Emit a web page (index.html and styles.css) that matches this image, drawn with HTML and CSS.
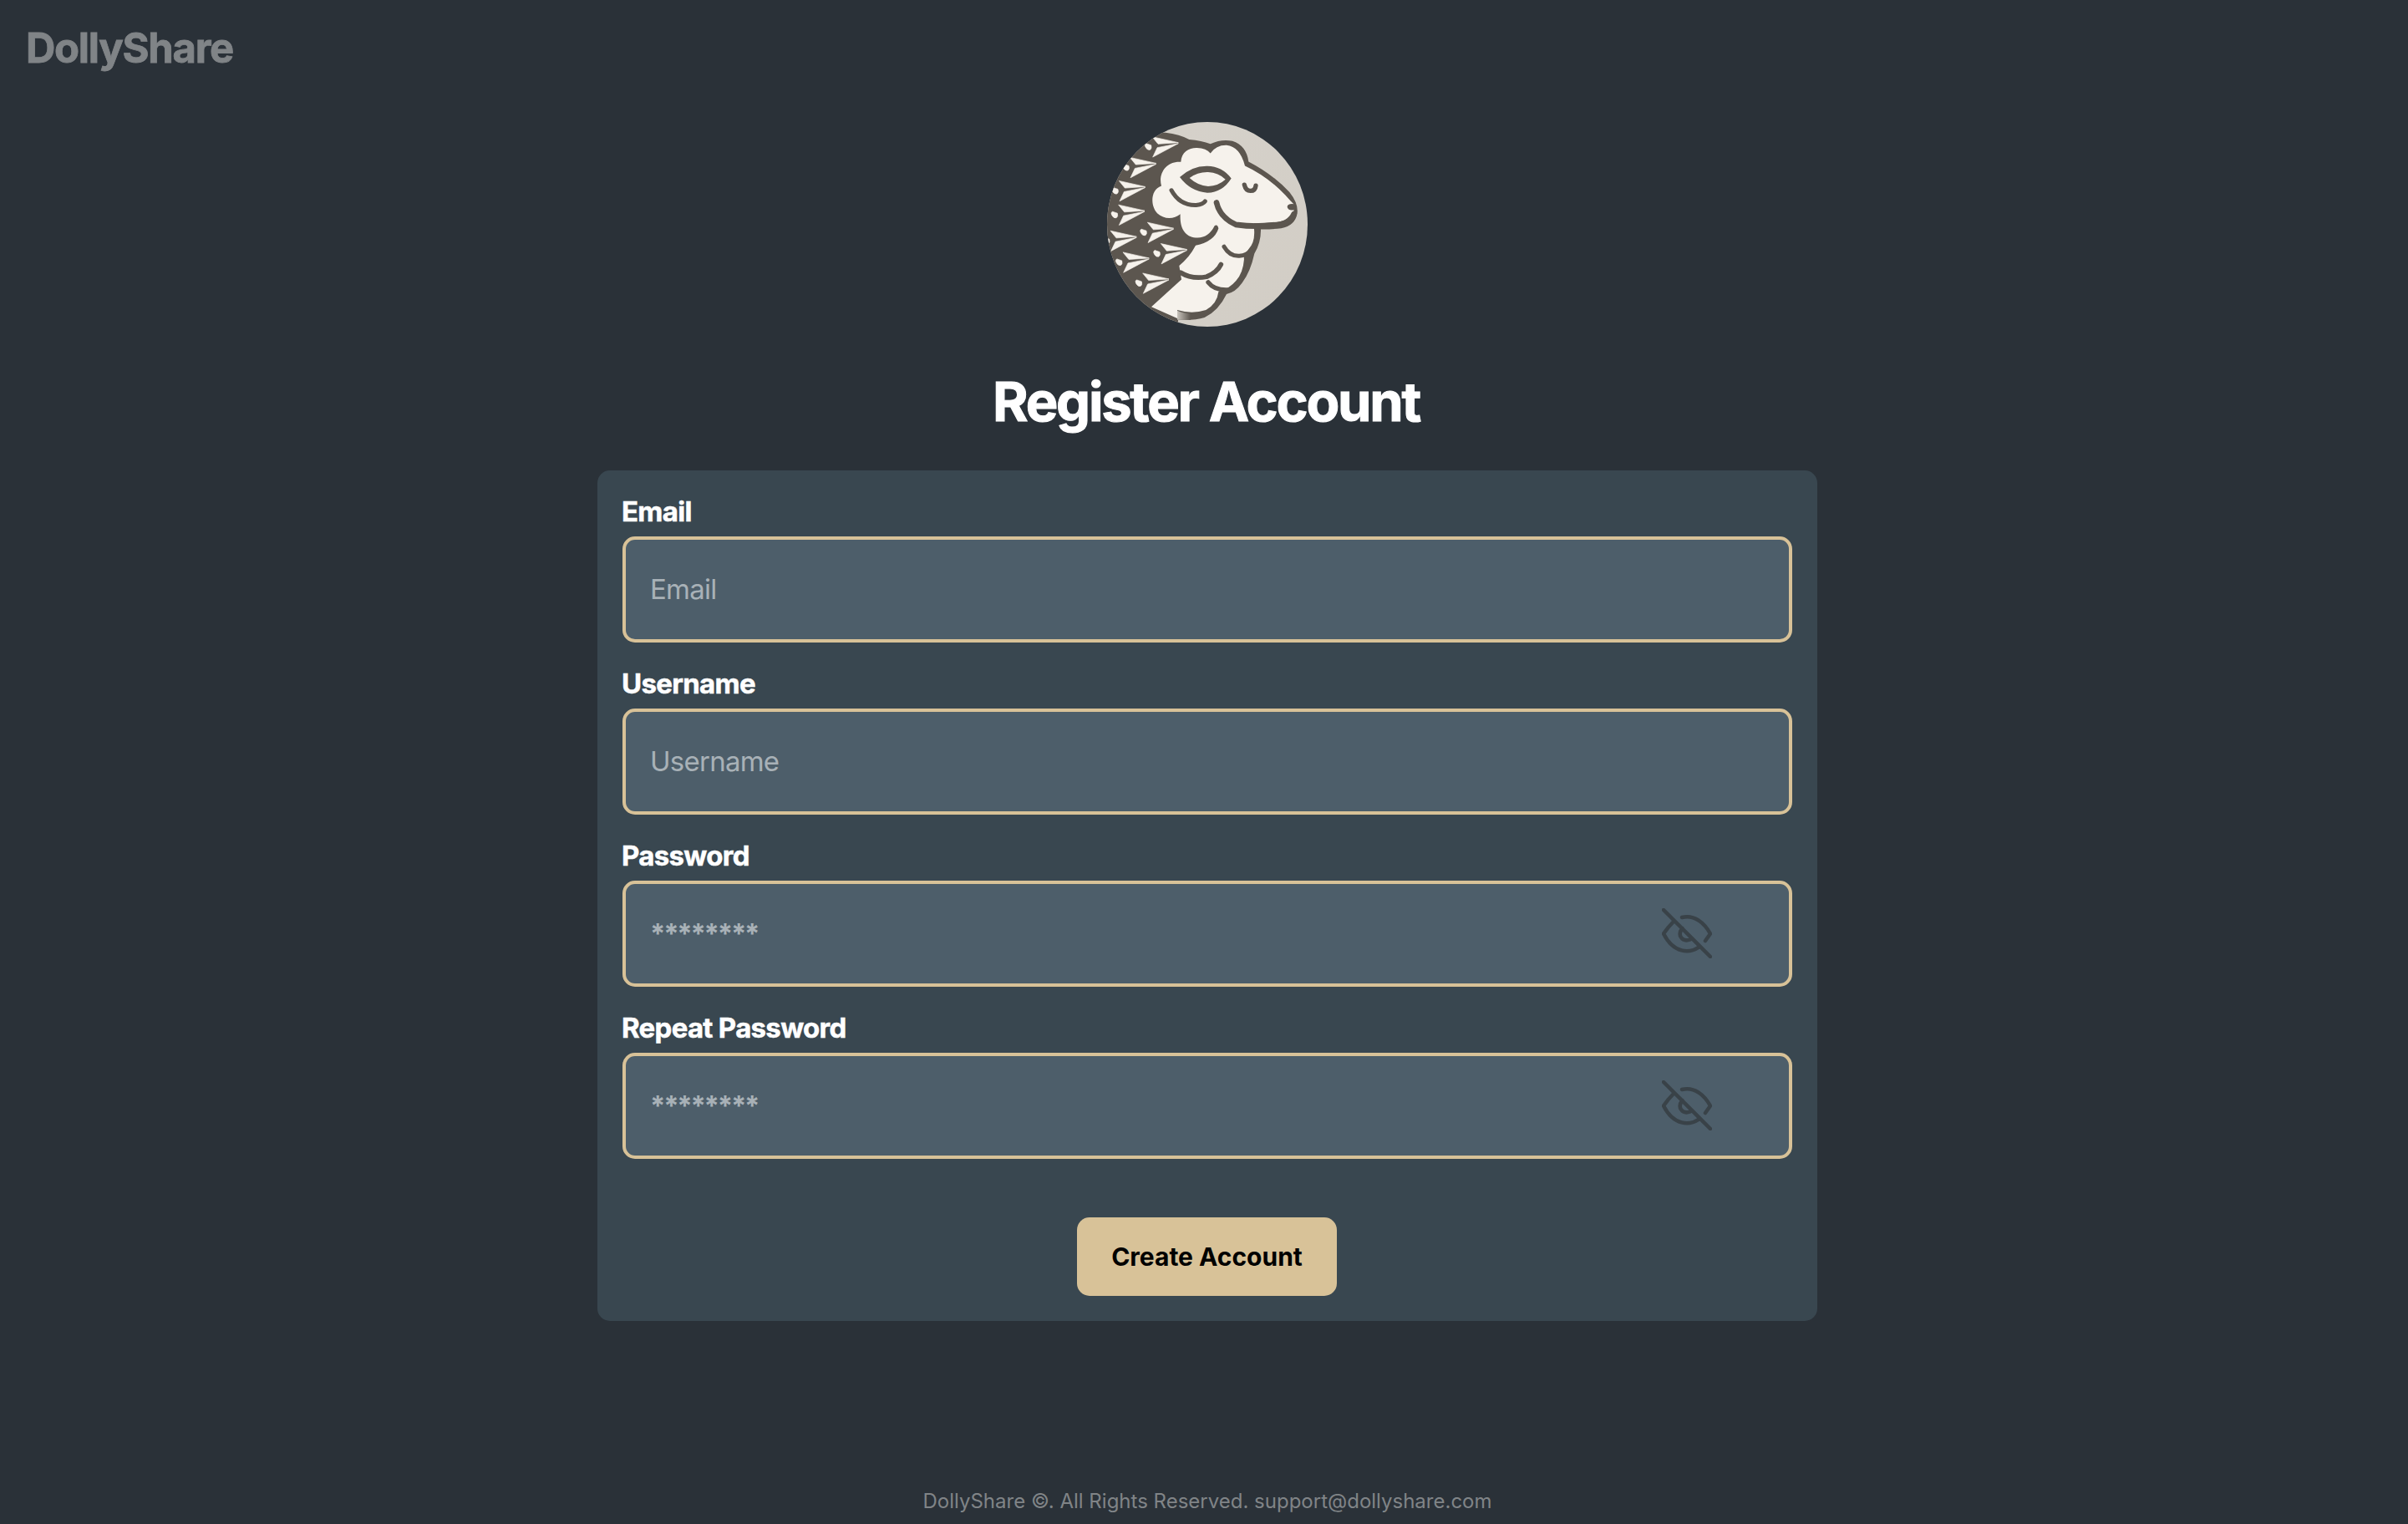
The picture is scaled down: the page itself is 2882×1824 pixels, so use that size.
FILE: index.html
```html
<!DOCTYPE html>
<html lang="en">
<head>
<meta charset="utf-8">
<title>DollyShare</title>
<link rel="stylesheet" href="styles.css">
</head>
<body>
<header class="header"><a class="brand">DollyShare</a></header>
<main class="main">
  <svg class="avatar" viewBox="45 48 720 734" preserveAspectRatio="none" aria-label="DollyShare sheep">
    <defs>
      <clipPath id="disc"><ellipse cx="405" cy="415" rx="360" ry="367"/></clipPath>
      <linearGradient id="paper" x1="0" y1="0" x2="1" y2="1"><stop offset="0" stop-color="#d6d2cb"/><stop offset="1" stop-color="#d2cdc5"/></linearGradient>
      <linearGradient id="fade" x1="0" y1="0" x2="1" y2="0"><stop offset="0" stop-color="#c9c4bc"/><stop offset="1" stop-color="#5c564f"/></linearGradient>
      <g id="quill" fill="#f6f2ec" stroke="#f6f2ec" stroke-width="2" stroke-linejoin="round">
        <path d="M0 -1 L-94 -22 L-73 4 Z"/>
        <path d="M0 2 L-76 17 L-92 51 Z"/>
        <path d="M-98 8 L-116 2 Q-123 6 -118 15 Q-112 27 -102 25 Q-94 20 -98 8 Z"/>
      </g>
    </defs>
    <g clip-path="url(#disc)">
      <rect x="45" y="48" width="720" height="734" fill="url(#paper)"/>
      <path fill="#5c564f" d="M40 80 L255 86 Q305 91 340 111 Q385 115 416 127 Q455 108 495 116 Q545 132 553 190 Q640 235 700 300 Q732 340 728 375 Q720 420 670 429 Q630 434 597 433 Q598 480 574 520 Q560 585 530 625 Q505 660 474 665 Q445 725 395 749 Q360 760 300 757 L300 790 L40 790 Z"/>
      <path fill="#f6f2ec" d="M310 191 C312 155 340 140 368 141 Q401 142 416 160 Q437 130 474 131 Q522 136 540 205 Q620 242 685 310 Q710 338 715 342 Q692 340 692 353 Q695 367 716 363 Q710 397 665 405 Q610 411 573 411 L573 433 Q577 480 553 504 Q533 530 537 540 Q533 590 508 617 Q485 645 445 657 Q440 700 400 722 Q350 738 297 722 L297 752 L204 711 L312 613 L304 563 Q340 535 363 491 Q430 477 445 430 Q442 414 431 420 Q410 462 370 463 C330 463 305 435 308 378 C285 397 250 398 225 375 C200 350 200 290 240 277 C228 235 255 188 310 191Z"/>
      <path fill="url(#fade)" d="M297 724 Q318 734 345 735 L345 758 L297 757Z"/>
      <g fill="none" stroke="#5c564f" stroke-linecap="round" stroke-linejoin="round">
        <path stroke-width="20" d="M438 337 Q450 390 507 416 Q570 425 640 419 Q700 416 716 378"/>
        <path stroke-width="15" d="M276 293 Q306 348 365 346 Q390 343 397 332"/>
        <path stroke-width="15" d="M465 495 Q485 530 520 528 Q548 526 562 508"/>
        <path stroke-width="17" d="M309 588 Q350 613 402 603 Q440 588 454 559"/>
        <path stroke-width="16" d="M408 623 Q430 652 478 650"/>
        <path stroke-width="16" d="M538 273 Q543 295 560 295 Q577 295 579 276"/>
      </g>
      <path fill="#5c564f" fill-rule="evenodd" d="M306 246 Q350 205 405 206 Q458 207 491 250 Q460 300 405 302 Q345 298 306 246Z M341 249 Q370 227 408 228 Q445 230 470 254 Q445 277 408 279 Q370 276 341 249Z"/>
      <use href="#quill" x="301" y="123"/><use href="#quill" x="221" y="197"/>
      <use href="#quill" x="182" y="281"/><use href="#quill" x="180" y="367"/>
      <use href="#quill" x="284" y="430"/><use href="#quill" x="151" y="460"/>
      <use href="#quill" x="332" y="506"/><use href="#quill" x="196" y="537"/>
      <use href="#quill" x="267" y="612"/>
    </g>
  </svg>
  <h1 class="title">Register Account</h1>
  <form class="card">
    <label class="field"><span class="label">Email</span><span class="control"><input class="input" type="text" placeholder="Email"></span></label>
    <label class="field"><span class="label">Username</span><span class="control"><input class="input" type="text" placeholder="Username"></span></label>
    <label class="field"><span class="label">Password</span><span class="control"><input class="input" type="password" placeholder="********">
      <svg class="eye" viewBox="0 0 60 60"><path d="M14 16 Q7 23 2 30.500 C14 54 33 55 45 46 M24 11 C39 7 51 18 58 30.500 L52 39 M24.500 24 C18 32 24 41 34 37.500 M2 2 L58 58"/></svg></span></label>
    <label class="field"><span class="label">Repeat Password</span><span class="control"><input class="input" type="password" placeholder="********">
      <svg class="eye" viewBox="0 0 60 60"><path d="M14 16 Q7 23 2 30.500 C14 54 33 55 45 46 M24 11 C39 7 51 18 58 30.500 L52 39 M24.500 24 C18 32 24 41 34 37.500 M2 2 L58 58"/></svg></span></label>
    <button class="submit" type="button">Create Account</button>
  </form>
</main>
<footer class="footer">DollyShare ©. All Rights Reserved. support@dollyshare.com</footer>
</body>
</html>
```
FILE: styles.css
```css
* { box-sizing: border-box; }
body {
  margin: 0;
  height: 1824px;
  overflow: hidden;
  display: flex;
  flex-direction: column;
  background: #2a3138;
  color: #fff;
  font-family: Inter, "Liberation Sans", sans-serif;
}
.header { height: 146px; padding: 28px 31px; }
.brand { font-size: 49px; line-height: 60px; font-weight: 700; letter-spacing: -1.3px; color: #808487; -webkit-text-stroke: 0.8px #808487; display: block; }
.main { display: flex; flex-direction: column; align-items: center; padding-left: 8px; }
.avatar { display: block; width: 240px; height: 245px; }
.title { margin: 50px 3px 0 0; height: 122px; font-size: 65px; line-height: 80px; font-weight: 700; letter-spacing: -2.3px; -webkit-text-stroke: 1px #fff; }
.card {
  width: 1460px;
  height: 1018px;
  padding: 30px;
  border-radius: 15px;
  background: #394750;
  display: flex;
  flex-direction: column;
}
.field { display: block; height: 206px; }
.label { display: block; height: 49px; margin-left: -1px; line-height: 38px; font-size: 33px; font-weight: 700; letter-spacing: -0.7px; -webkit-text-stroke: 0.5px #fff; }
.control { display: block; position: relative; }
.input {
  display: block;
  width: 100%;
  height: 127px;
  padding: 0 30px 2px 29px;
  border: 4px solid #d8c298;
  border-radius: 15px;
  background: #4d5e6a;
  color: #fff;
  font: 400 33px Inter, "Liberation Sans", sans-serif;
  letter-spacing: -0.75px;
}
.input::placeholder { color: #a8b1b7; opacity: 1; }
.input[type="password"]::placeholder { font-weight: 700; letter-spacing: -2.3px; }
.eye {
  position: absolute;
  right: 96px;
  top: 33px;
  width: 60px;
  height: 60px;
  fill: none;
  stroke: #394248;
  stroke-width: 4.500;
  stroke-linecap: round;
  stroke-linejoin: round;
}
.submit {
  align-self: center;
  margin: 40px 1px 0 0;
  width: 311px;
  height: 94px;
  padding: 0;
  border: 0;
  border-radius: 15px;
  background: #d8c298;
  color: #000;
  font: 700 30px Inter, "Liberation Sans", sans-serif;
}
.footer { margin-top: auto; height: 42px; padding-left: 8px; text-align: center; font-size: 24px; line-height: 30px; color: #808487; }
```
